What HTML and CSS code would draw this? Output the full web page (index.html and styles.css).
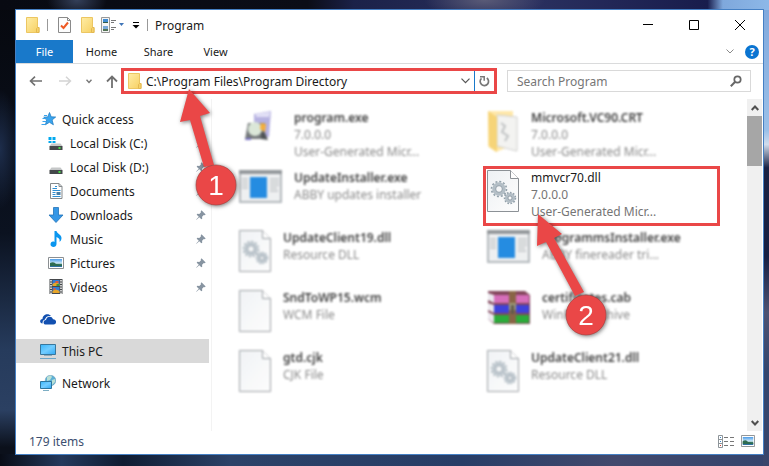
FILE: index.html
```html
<!DOCTYPE html>
<html lang="en">
<head>
<meta charset="utf-8">
<title>Program</title>
<link rel="stylesheet" href="styles.css">
</head>
<body>
<svg width="0" height="0" class="defs" aria-hidden="true">
  <defs>
    <linearGradient id="gFolder" x1="0" y1="0" x2="1" y2="1"><stop offset="0" stop-color="#ffeda6"/><stop offset="1" stop-color="#f6cf60"/></linearGradient>
    <linearGradient id="gScreen" x1="0" y1="0" x2="1" y2="1"><stop offset="0" stop-color="#38b6fb"/><stop offset=".5" stop-color="#73cdff"/><stop offset="1" stop-color="#2fa8f5"/></linearGradient>
    <linearGradient id="gPage" x1="0" y1="0" x2="1" y2="1"><stop offset="0" stop-color="#eef1f4"/><stop offset="1" stop-color="#fdfdfd"/></linearGradient>
    <linearGradient id="gPic" x1="0" y1="0" x2="0" y2="1"><stop offset="0" stop-color="#4b9be8"/><stop offset=".55" stop-color="#d5eefb"/><stop offset=".6" stop-color="#3d7b5c"/><stop offset="1" stop-color="#2c6fb0"/></linearGradient>
    <symbol id="folder" viewBox="0 0 14 16"><path d="M.5.5h11v10h1.500v5H.5z" fill="url(#gFolder)" stroke="#ecc662"/><path d="M10.500 15.500v-4l1-1H13v5z" fill="#f6d26b" stroke="#e3b850"/></symbol>
    <symbol id="pin" viewBox="0 0 10 10"><path d="M5.500.3 9.700 4.500 8.600 5.300 7.800 5 6.100 6.700 6.200 8.700 5.300 9.300 3.300 7.200.5 9.800.2 9.500 2.800 6.700.7 4.700 1.300 3.800 3.300 3.900 5 2.200 4.700 1.400z" fill="#8794a1"/></symbol>
    <symbol id="drive" viewBox="0 0 15 16"><path d="M3 8.500h9l2 2.500H1z" fill="#c5c7c8"/><rect x="1" y="11" width="13" height="4" fill="#44484b"/><rect x="10" y="12" width="2" height="2" fill="#45dc45"/></symbol>
    <symbol id="page" viewBox="0 0 32 42"><path d="M.5.500h23l8 8v33H.5z" fill="url(#gPage)" stroke="#8c9196"/><path d="M23.500.500v8h8" fill="#fff" stroke="#8c9196"/></symbol>
    <symbol id="dll" viewBox="0 0 32 42"><use href="#page"/><g fill="none" stroke="#b3bec6"><circle cx="12" cy="19" r="5" stroke-width="3.500"/><circle cx="12" cy="19" r="7.500" stroke="#93a1ab" stroke-width="1.600" stroke-dasharray="2 1.930"/><circle cx="12" cy="19" r="3.300" stroke="#7e8d98" stroke-width=".7"/><circle cx="23" cy="28" r="3.500" stroke-width="3"/><circle cx="23" cy="28" r="5.500" stroke="#93a1ab" stroke-width="1.500" stroke-dasharray="1.700 1.440"/><circle cx="23" cy="28" r="2" stroke="#7e8d98" stroke-width=".7"/></g></symbol>
    <symbol id="app" viewBox="0 0 43 33"><path d="M1 1h41v31H1z" fill="#eceeef" stroke="#a7adb2" stroke-width="2"/><path d="M0 0h43v4H0z" fill="#81868a"/><path d="M11 7h17v21H11z" fill="#0078dc"/><path d="M3 9h6M3 12h6M3 15h6M3 18h6M31 9h9M31 12h9M31 15h9M31 18h7M31 21h8" stroke="#b8bcc0" stroke-width="1.500"/></symbol>
    <symbol id="picture" viewBox="0 0 16 12"><path d="M.5.500h15v11H.5z" fill="#fff" stroke="#8b8f92"/><path d="M2 2h12v8H2z" fill="url(#gPic)"/><path d="M2 6q4-2 6 1l6 1v1H2z" fill="#2e6c51"/></symbol>
  </defs>
</svg>

<main class="window">
  <header class="titlebar">
    <svg class="ic-folder" viewBox="0 0 14 16"><use href="#folder"/></svg>
    <span class="sep"></span>
    <button class="tool" aria-label="Properties"><svg width="13" height="16" viewBox="0 0 13 16"><path d="M.5.500h9l3 3v12H.5z" fill="#fdfdfd" stroke="#8a8a8a"/><path d="M9.500.500v3h3" fill="none" stroke="#8a8a8a"/><path d="m3 8.500 2.500 2.500L10 5.500" fill="none" stroke="#ee5a24" stroke-width="2"/></svg></button>
    <button class="tool" aria-label="New folder"><svg class="ic-folder" viewBox="0 0 14 16"><use href="#folder"/></svg></button>
    <button class="tool view-tool" aria-label="View options"><svg width="23" height="16" viewBox="0 0 23 16"><path d="M.5.500h8v15h-8z" fill="#f4f4f4" stroke="#999"/><path d="M2 2h5v4H2z" fill="#3f8bd3"/><path d="M2 5h5v1H2z" fill="#315b4a"/><path d="M2 9h5v5H2z" fill="#79a8d8"/><path d="M2 12h5v2H2z" fill="#527254"/><path d="M10 3.500h5M10 5.500h3M10 10.500h5M10 12.500h3" stroke="#777"/><path d="M18 6h5l-2.500 3z" fill="#3f75b8"/></svg></button>
    <button class="tool" aria-label="Customize"><svg width="8" height="8" viewBox="0 0 8 8"><path d="M1 1.500h6" stroke="#000"/><path d="M.5 4h7L4 7.500z"/></svg></button>
    <span class="sep"></span>
    <h1>Program</h1>
    <div class="caption">
      <button aria-label="Minimize"><svg viewBox="0 0 10 10"><path d="M0 4.500h10" stroke="#000"/></svg></button>
      <button aria-label="Maximize"><svg viewBox="0 0 10 10"><path d="M.5.500h9v9h-9z" fill="none" stroke="#000"/></svg></button>
      <button aria-label="Close"><svg viewBox="0 0 10 10"><path d="m0 0 10 10M10 0 0 10" stroke="#000"/></svg></button>
    </div>
  </header>

  <nav class="tabs" aria-label="Ribbon">
    <a class="tab active" href="#">File</a>
    <a class="tab" href="#">Home</a>
    <a class="tab" href="#">Share</a>
    <a class="tab" href="#">View</a>
    <div class="tab-tools">
      <button aria-label="Expand ribbon"><svg width="8" height="5" viewBox="0 0 8 5"><path d="m.5.500 3.500 3.500L7.500.500" fill="none" stroke="#8a8a8a"/></svg></button>
      <button class="help" aria-label="Help">?</button>
    </div>
  </nav>

  <div class="addressbar">
    <div class="history">
      <button aria-label="Back"><svg width="13" height="10" viewBox="0 0 13 10"><path d="M13 5H1.500M6 .7 1.500 5 6 9.300" fill="none" stroke="#707070" stroke-width="1.600"/></svg></button>
      <button aria-label="Forward"><svg width="13" height="10" viewBox="0 0 13 10"><path d="M0 5h11.500M7 .7 11.500 5 7 9.300" fill="none" stroke="#d4d4d4" stroke-width="1.500"/></svg></button>
      <button aria-label="Recent"><svg width="6" height="5" viewBox="0 0 6 5"><path d="M.5.800 3 3.500 5.500.800" fill="none" stroke="#777" stroke-width="1.400"/></svg></button>
      <button aria-label="Up"><svg width="12" height="13" viewBox="0 0 12 13"><path d="M6 13V1.500M1 6.500l5-5 5 5" fill="none" stroke="#707070" stroke-width="1.800"/></svg></button>
    </div>
    <div class="path">
      <svg class="ic-folder" viewBox="0 0 14 16"><use href="#folder"/></svg>
      <input type="text" aria-label="Address" value="C:\Program Files\Program Directory">
      <button aria-label="Previous locations"><svg width="9" height="6" viewBox="0 0 9 6"><path d="m.5.700 4 4 4-4" fill="none" stroke="#555" stroke-width="1.200"/></svg></button>
      <button class="refresh" aria-label="Refresh"><svg width="11" height="12" viewBox="0 0 11 12"><path d="M7.800 3A4.200 4.200 0 1 1 2.500 3.300" fill="none" stroke="#777" stroke-width="1.700"/><path d="M1 1.800h4.200v4" fill="none" stroke="#777" stroke-width="1.500"/></svg></button>
    </div>
    <div class="search">
      <input type="text" aria-label="Search" placeholder="Search Program">
      <svg width="12" height="12" viewBox="0 0 12 12"><circle cx="7.500" cy="4.500" r="3.200" fill="none" stroke="#666" stroke-width="1.700"/><path d="M5.200 6.800.8 11.200" stroke="#666" stroke-width="2"/></svg>
    </div>
  </div>

  <div class="body">
    <nav class="tree" aria-label="Folders">
      <a class="node top" href="#"><svg viewBox="0 0 16 16"><path d="m9.500 1.500 1.700 4.300 4.500.2-3.600 3 1.300 4.800-4-2.500-4 2.500L6.700 9 3.700 6.200l4-.300z" fill="#3aa4ed" stroke="#1976bd" stroke-width=".7"/><path d="M4 4.500h3M2.500 7.500h3M2.500 10.500h4M1.500 13.500h4" stroke="#3aa4ed"/></svg>Quick access</a>
      <a class="node" href="#"><svg viewBox="0 0 15 16"><use href="#drive"/><path d="M0 2h3v3H0zM4 2h3v3H4zM0 6h3v2H0zM4 6h3v2H4z" fill="#00a9ef"/></svg>Local Disk (C:)<svg class="pin"><use href="#pin"/></svg></a>
      <a class="node" href="#"><svg viewBox="0 0 15 16"><use href="#drive"/></svg>Local Disk (D:)<svg class="pin"><use href="#pin"/></svg></a>
      <a class="node" href="#"><svg viewBox="0 0 15 16"><path d="M2 .500h8.500l3 3v12H2z" fill="#fff" stroke="#858a8d"/><path d="M10.500.500v3h3" fill="none" stroke="#858a8d"/><path d="M6.500 3.500h2M4 5.500h4.500M4 7.500h8M4 9.500h3M4 11.500h3M4 13.500h8" stroke="#2e8fd4"/><path d="M8 9h4v3H8z" fill="#487fa6"/></svg>Documents<svg class="pin"><use href="#pin"/></svg></a>
      <a class="node" href="#"><svg viewBox="0 0 15 16"><path d="M5 .500h5v7.500h4.500L7.500 15.500.500 8H5z" fill="#3597e6" stroke="#2272b8" stroke-width=".8"/></svg>Downloads<svg class="pin"><use href="#pin"/></svg></a>
      <a class="node" href="#"><svg viewBox="0 0 15 16"><path d="M6 0h2c.5 3 5 3.500 5 7 0 2-1 3-2 4 .5-3-.5-4-3-5v7c0 4-6 3.500-6 .5C2 11 4 10 6 11z" fill="#0a96ef"/></svg>Music<svg class="pin"><use href="#pin"/></svg></a>
      <a class="node" href="#"><svg viewBox="0 0 16 16"><use href="#picture" y="2" width="16" height="12"/></svg>Pictures<svg class="pin"><use href="#pin"/></svg></a>
      <a class="node" href="#"><svg viewBox="0 0 15 16"><path d="M1 0h13v15H1z" fill="#45484b"/><path d="M2.500 1v14M12.500 1v14" stroke="#f4f4f4" stroke-width="1.500" stroke-dasharray="1.500 1"/><path d="M4 1h7v6H4zM4 8h7v6H4z" fill="#327bd4"/><path d="M4 5q3-3 7 0v2H4zM4 12q3-3 7 0v2H4z" fill="#e7a529"/><path d="M7 2h3v2H7zM5 9h2v2H5z" fill="#df5939"/><path d="M8 5h3v2H8z" fill="#3a9845"/></svg>Videos<svg class="pin"><use href="#pin"/></svg></a>
      <a class="node top group" href="#"><svg viewBox="0 0 16 16"><path d="M2.500 12.500C-.8 12.500-.5 8 2.500 8 2.500 4 8 1.500 11 5 7 4.500 5.500 6.500 5 8.500 3 9 2.500 10.500 2.500 12.500z" fill="#1250b0"/><path d="M6 13.500c-3.500 0-3-4.500 0-4.500.5-4 6-4.500 7-.8 4-.2 4 5.300.5 5.300z" fill="#1250b0"/></svg>OneDrive</a>
      <a class="node top group selected" href="#"><svg viewBox="0 0 16 16"><path d="M.5 1.500h15v10H.5z" fill="url(#gScreen)" stroke="#39779c"/><path d="M4 12.500h8" stroke="#8cabbc"/><path d="M0 15.500h16" stroke="#6da6c7"/></svg>This PC</a>
      <a class="node top group" href="#"><svg viewBox="0 0 16 16"><circle cx="10.500" cy="5.500" r="5.300" fill="#5cb0d6" stroke="#6e99b0" stroke-width=".5"/><path d="M7 2q4-3 5 0l-2 3-3 1zM12 5l3-1v3l-3 3z" fill="#b9e0d6"/><path d="M.5 6.500h11v7H.5z" fill="url(#gScreen)" stroke="#2d769e"/><path d="M3 15.500h6" stroke="#7daec4"/></svg>Network</a>
    </nav>

    <section class="files" aria-label="Files">
      <article class="file blurred">
        <svg width="43" height="42" viewBox="0 0 43 42"><path d="M15 4l17-3-2 26H15z" fill="#aaa5dc"/><path d="M17 4l14-2-1 5H17z" fill="#dedcf5"/><path d="M9 13h17v16H6z" fill="#5d6264"/><circle cx="16" cy="19" r="7" fill="#d5e3d2"/><path d="m22 13 5 1-1 8-5-3z" fill="#f3a11b"/><path d="m22 22 4 1 3 7-7-1z" fill="#303538"/><path d="M7 28h5v2H6z" fill="#625bbd"/></svg>
        <div><b>program.exe</b><span>7.0.0.0</span><span>User-Generated Micr...</span></div>
      </article>
      <article class="file blurred">
        <svg width="32" height="42" viewBox="0 0 32 42"><path d="M1 1h25v34l-17 7-8-6z" fill="#ffe49b"/><path d="m10 5 20 2v34l-20-5z" fill="#f1f1ef" stroke="#c7c7c4"/><path d="M1 1 10 7v35l-8-5z" fill="#f5cd61"/><path d="m14 13 4 3-3 6 6 4-3 5" fill="none" stroke="#b7babb" stroke-width="2"/></svg>
        <div><b>Microsoft.VC90.CRT</b><span>7.0.0.0</span><span>User-Generated Micr...</span></div>
      </article>
      <article class="file blurred">
        <svg width="43" height="33"><use href="#app"/></svg>
        <div><b>UpdateInstaller.exe</b><span>ABBY updates installer</span></div>
      </article>
      <article class="file marked">
        <svg width="32" height="42"><use href="#dll"/></svg>
        <div><b>mmvcr70.dll</b><span>7.0.0.0</span><span>User-Generated Micr...</span></div>
      </article>
      <article class="file blurred">
        <svg width="32" height="42"><use href="#dll"/></svg>
        <div><b>UpdateClient19.dll</b><span>Resource DLL</span></div>
      </article>
      <article class="file blurred">
        <svg width="43" height="33"><use href="#app"/></svg>
        <div><b>ProgrammsInstaller.exe</b><span>ABBY finereader tri...</span></div>
      </article>
      <article class="file blurred">
        <svg width="32" height="42"><use href="#page"/></svg>
        <div><b>SndToWP15.wcm</b><span>WCM File</span></div>
      </article>
      <article class="file blurred">
        <svg width="43" height="35" viewBox="0 0 43 35"><path d="M1 1h37l5 4v29H7l-6-5z" fill="#6e263f"/><path d="M5 5h37v8H7z" fill="#cf55ae"/><path d="M7 15h35v8H7z" fill="#1d21d5"/><path d="M7 25h35v8H7z" fill="#079d18"/><path d="m1 3 6 2v8l-6-3zM1 13l6 2v8l-6-3zM1 22l6 3v8l-6-4z" fill="#e9e6ed"/><path d="M22 1h7v33h-7z" fill="#754a26"/><path d="M22 13h7v7h-7z" fill="#8f8c62"/><path d="M24 15h3v9h-3z" fill="#423c2e"/></svg>
        <div><b>certificates.cab</b><span>WinRAR archive</span></div>
      </article>
      <article class="file blurred">
        <svg width="32" height="42"><use href="#page"/></svg>
        <div><b>gtd.cjk</b><span>CJK File</span></div>
      </article>
      <article class="file blurred">
        <svg width="32" height="42"><use href="#dll"/></svg>
        <div><b>UpdateClient21.dll</b><span>Resource DLL</span></div>
      </article>
    </section>

    <div class="scrollbar">
      <button aria-label="Scroll up"><svg width="8" height="6" viewBox="0 0 8 6"><path d="m.7 5 3.300-3.500L7.300 5" fill="none" stroke="#505050" stroke-width="2"/></svg></button>
      <div class="thumb"></div>
      <button aria-label="Scroll down"><svg width="8" height="6" viewBox="0 0 8 6"><path d="m.7 1 3.300 3.500L7.300 1" fill="none" stroke="#505050" stroke-width="2"/></svg></button>
    </div>
  </div>

  <footer class="status">
    <span>179 items</span>
    <button aria-label="Details"><svg width="16" height="13" viewBox="0 0 16 13"><path d="M.5.500h4v12h-4zM.5 4.500h4M.5 8.500h4" fill="#fff" stroke="#8d9499"/><path d="M2 2h1v1H2zM2 6h1v1H2z" fill="#3986c6"/><path d="M2 10h1v1H2z" fill="#d23f32"/><path d="M6 2.500h4M12 2.500h4M6 6.500h4M12 6.500h4M6 10.500h4M12 10.500h4" stroke="#777"/></svg></button>
    <button aria-label="Thumbnails"><svg width="14" height="12" viewBox="0 0 16 12" preserveAspectRatio="none"><use href="#picture"/></svg></button>
  </footer>
</main>

<svg class="callout one" viewBox="0 0 62 124" role="img" aria-label="Step 1"><path d="m14 0 21 24-10 3 14 49-10 2-14-47-10 2z" fill="#ea4747"/><circle cx="41" cy="96" r="20" fill="#ea4747" stroke="#a43c3c" stroke-width=".6"/><text x="41" y="106">1</text></svg>
<svg class="callout two" viewBox="0 0 76 124" role="img" aria-label="Step 2"><path d="M2 0 26 20l-8 4 30 54-9 4L10 28l-9 4z" fill="#ea4747"/><circle cx="50" cy="101" r="20" fill="#ea4747" stroke="#a43c3c" stroke-width=".6"/><text x="50" y="111">2</text></svg>
</body>
</html>
```
FILE: styles.css
```css
* { box-sizing: border-box; }

body {
  margin: 0;
  min-height: 100vh;
  padding: 9px 5px 11px 15px;
  display: flex;
  font: 12px/17px "Noto Sans", "Open Sans", sans-serif;
  color: #1a1a1a;
  background:
    radial-gradient(ellipse 30px 20px at 10% 0, #34405a, transparent),
    radial-gradient(ellipse 60px 20px at 63% 0, #5a5b77, transparent),
    radial-gradient(ellipse 20px 60px at 0 32%, #1d2d4b, transparent),
    linear-gradient(90deg, #080a12 0, #0b0d17 40%, #1b2148 46%, #2b3160 68%, #181c4c 92%, #7fa8dc 94%, #8db8e8 100%) top / 100% 10px no-repeat,
    linear-gradient(180deg, #7fa8dc 0, #9bc0e8 28%, #d0dcec 31%, #1a2244 36%, #172044 55%, #4d5272 67%, #33466e 80%, #39466b 100%) right / 6px 100% no-repeat,
    linear-gradient(90deg, #080c16 0, #24395c 8%, #0f1c32 16%, #2c4268 30%, #273d66 60%, #42496d 80%, #34446d 100%) bottom / 100% 12px no-repeat,
    linear-gradient(180deg, #06080e 0, #0b1220 50%, #263b5c 75%, #2b4062 88%, #0b101b 96%);
}

button {
  display: flex;
  align-items: center;
  justify-content: center;
  padding: 0;
  border: 0;
  background: none;
  font: inherit;
}

a { color: inherit; text-decoration: none; }
svg { flex: none; }

input {
  flex: 1;
  min-width: 0;
  padding: 0;
  border: 0;
  outline: 0;
  background: none;
  color: inherit;
  font: inherit;
}

.defs { position: absolute; }
.ic-folder { width: 14px; height: 16px; }

.window {
  flex: 1;
  min-width: 0;
  display: flex;
  flex-direction: column;
  border: 1px solid #4580c4;
  background: #fff;
}

.titlebar { display: flex; align-items: center; height: 30px; padding-left: 10px; }
.titlebar .sep { width: 1px; height: 12px; margin-left: 7px; background: #999; }
.titlebar .tool { margin-left: 10px; }
.titlebar .view-tool { margin-left: 6px; }
.titlebar .view-tool + .tool { margin-left: 8px; }
.titlebar h1 { margin: 0 0 0 7px; font-size: 12px; font-weight: 400; }
.caption { display: flex; margin-left: auto; }
.caption button { width: 46px; height: 28px; }
.caption svg { width: 10px; height: 10px; }

.tabs { display: flex; height: 24px; border-bottom: 1px solid #dadbdc; font-size: 11px; }
.tab { width: 57px; line-height: 23px; text-align: center; }
.tab.active { background: #1979ca; color: #fff; }
.tab-tools { display: flex; align-items: center; gap: 11px; margin-left: auto; padding-right: 4px; }
.help { width: 14px; height: 14px; border-radius: 50%; background: #0a74d1; color: #fff; font-size: 11px; font-weight: 700; line-height: 14px; }

.addressbar { display: flex; align-items: center; height: 34px; padding-right: 12px; }
.history { display: flex; align-items: center; width: 105px; padding-left: 13px; }
.history button:nth-child(2) { margin-left: 17px; }
.history button:nth-child(3) { margin-left: 14px; }
.history button:nth-child(4) { margin-left: 14px; }
.path { flex: 1; display: flex; align-items: center; height: 26px; padding-left: 4px; border: 3px solid #ea4747; }
.path input { margin-left: 4px; }
.path .refresh { width: 20px; height: 20px; margin-left: 4px; border-left: 1px solid #1979ca; }
.search { width: 244px; display: flex; align-items: center; height: 22px; margin-left: 10px; padding: 0 8px 0 9px; border: 1px solid #d9d9d9; }
.search input::placeholder { color: #767676; opacity: 1; }

.body { flex: 1; display: flex; padding-top: 1px; }
.tree { width: 196px; padding-top: 8px; border-right: 1px solid #f3f3f3; }
.node { display: flex; align-items: center; gap: 6px; height: 24px; margin-right: 2px; padding: 0 3px 0 32px; }
.node svg { width: 16px; height: 16px; }
.node.top { padding-left: 24px; }
.node.group { margin-top: 8px; }
.node .pin { width: 10px; height: 10px; margin-left: auto; }
.selected { background: #d9d9d9; }

.files { flex: 1; display: grid; grid-template-columns: 248px 1fr; grid-auto-rows: 60px; align-content: start; padding: 7px 27px 0 23px; }
.file { display: flex; gap: 12px; padding: 3px 0 0 4px; }
.file > svg { margin-top: 1px; }
.file div { display: flex; flex-direction: column; white-space: nowrap; }
.file b { font-weight: 400; color: #1a1a1a; }
.file span { color: #757575; }
.blurred { filter: blur(1px); opacity: .85; }
.blurred b { font-weight: 600; }
.marked { border: 3px solid #ea4747; padding: 0 0 0 1px; }

.scrollbar { display: flex; flex-direction: column; width: 15px; margin-right: 1px; background: #f0f0f0; }
.scrollbar button { height: 17px; }
.thumb { height: 50px; margin-bottom: auto; background: #a6a6a6; }

.status { display: flex; align-items: center; gap: 7px; height: 23px; padding: 0 8px 3px 13px; color: #3c4f70; }
.status span { margin-right: auto; }

.callout { position: absolute; filter: drop-shadow(1px 1px 2px #0008); }
.callout text { fill: #fff; font: 28px "Liberation Sans", sans-serif; text-anchor: middle; }
.one { left: 175px; top: 89px; width: 62px; height: 124px; }
.two { left: 536px; top: 214px; width: 76px; height: 124px; }
```
